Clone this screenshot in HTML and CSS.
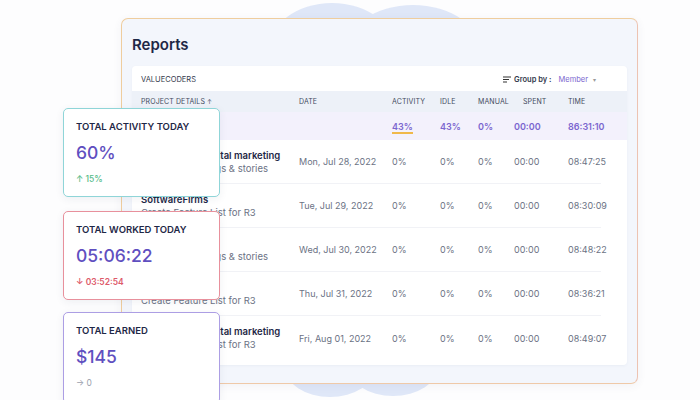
FILE: index.html
```html
<!DOCTYPE html>
<html>
<head>
<meta charset="utf-8">
<link rel="stylesheet" href="styles.css">
</head>
<body>
<div class="stage">
  <div class="blob b1"></div>
  <div class="blob b2"></div>
  <div class="blob b3"></div>
  <div class="blob b4"></div>

  <div class="panel">
    <h1 class="title">Reports</h1>
    <div class="table-card">
      <div class="toolbar">
        <span class="org">VALUECODERS</span>
        <span class="group">
          <svg class="sort-icon" width="8" height="7" viewBox="0 0 8 7"><path d="M0 1h8M0 3.5h6M0 6h4" stroke="#333" stroke-width="1.2"/></svg>
          <b>Group by :</b>
          <span class="member">Member</span>
          <span class="caret">▾</span>
        </span>
      </div>
      <div class="row head">
        <span>PROJECT DETAILS <small>↑</small></span>
        <span>DATE</span>
        <span>ACTIVITY</span>
        <span>IDLE</span>
        <span>MANUAL</span>
        <span class="spent-h">SPENT</span>
        <span>TIME</span>
      </div>
      <div class="row summary">
        <span></span>
        <span></span>
        <span class="act">43%</span>
        <span>43%</span>
        <span>0%</span>
        <span>00:00</span>
        <span>86:31:10</span>
      </div>
      <div class="row data">
        <span class="proj"><b>ValueCoders Digital marketing</b><i>Write weekly blogs &amp; stories</i></span>
        <span>Mon, Jul 28, 2022</span><span>0%</span><span>0%</span><span>0%</span><span>00:00</span><span>08:47:25</span>
      </div>
      <div class="row data">
        <span class="proj"><b>SoftwareFirms</b><i>Create Feature List for R3</i></span>
        <span>Tue, Jul 29, 2022</span><span>0%</span><span>0%</span><span>0%</span><span>00:00</span><span>08:30:09</span>
      </div>
      <div class="row data">
        <span class="proj"><b>SoftwareFirms</b><i>Write weekly blogs &amp; stories</i></span>
        <span>Wed, Jul 30, 2022</span><span>0%</span><span>0%</span><span>0%</span><span>00:00</span><span>08:48:22</span>
      </div>
      <div class="row data">
        <span class="proj"><b>SoftwareFirms</b><i>Create Feature List for R3</i></span>
        <span>Thu, Jul 31, 2022</span><span>0%</span><span>0%</span><span>0%</span><span>00:00</span><span>08:36:21</span>
      </div>
      <div class="row data last">
        <span class="proj"><b>ValueCoders Digital marketing</b><i>Create Feature List for R3</i></span>
        <span>Fri, Aug 01, 2022</span><span>0%</span><span>0%</span><span>0%</span><span>00:00</span><span>08:49:07</span>
      </div>
    </div>
  </div>

  <div class="stat teal">
    <div class="stat-title">TOTAL ACTIVITY TODAY</div>
    <div class="stat-value">60%</div>
    <div class="stat-delta up">↑ 15%</div>
  </div>
  <div class="stat rose">
    <div class="stat-title">TOTAL WORKED TODAY</div>
    <div class="stat-value">05:06:22</div>
    <div class="stat-delta down">↓ 03:52:54</div>
  </div>
  <div class="stat violet">
    <div class="stat-title">TOTAL EARNED</div>
    <div class="stat-value">$145</div>
    <div class="stat-delta flat">→ 0</div>
  </div>
</div>
</body>
</html>
```

FILE: styles.css
```css
* { box-sizing: border-box; }
html, body { margin: 0; padding: 0; }
body {
  width: 700px;
  height: 400px;
  overflow: hidden;
  background: #fdfdfe;
  font-family: Inter, "Liberation Sans", sans-serif;
  color: #1e2746;
}
.stage {
  position: relative;
  width: 700px;
  height: 400px;
  padding: 18px 0 0 121px;
}
.blob {
  position: absolute;
  background: #dfe7f8;
  border-radius: 50%;
}
.b1 { left: 267px; top: 3px; width: 130px; height: 100px; }
.b2 { left: 343px; top: 5px; width: 140px; height: 100px; }
.b3 { left: 285px; top: 337px; width: 90px; height: 60px; }
.b4 { left: 348px; top: 336px; width: 90px; height: 60px; }

.panel {
  position: relative;
  width: 517px;
  height: 366px;
  background: #f3f6fc;
  border: 1.5px solid #efcd9e;
  border-right-color: #edc3b2;
  border-bottom-color: #efc9a8;
  border-radius: 7px;
  padding: 0 10px 0 10px;
  box-shadow: 0 2px 10px rgba(60, 70, 110, 0.06);
}
.title {
  margin: 0;
  height: 47px;
  padding-top: 16px;
  font-size: 15px;
  font-weight: 600;
  color: #1e2746;
}
.table-card {
  background: #fff;
  border-radius: 4px;
  height: 299px;
  box-shadow: 0 1px 3px rgba(60, 70, 110, 0.05);
}
.toolbar {
  height: 25px;
  display: flex;
  align-items: center;
  justify-content: space-between;
  padding: 2px 31px 0 9px;
  font-size: 7.5px;
  color: #333a4d;
}
.group { display: flex; align-items: center; gap: 3px; }
.group b { font-weight: 600; color: #333a4d; margin-right: 4px; }
.member { color: #7b66cf; }
.caret { color: #999; font-size: 6px; margin-left: 2px; }

.row {
  display: grid;
  grid-template-columns: 158px 93px 48px 38px 36px 54px 1fr;
  align-items: center;
  padding-left: 9px;
}
.head {
  height: 21px;
  background: #edf1f8;
  font-size: 7px;
  color: #434b5e;
  letter-spacing: 0.1px;
}
.head small { font-size: 6px; }
.spent-h { padding-left: 9px; }
.summary {
  height: 28px;
  background: #f3f1fc;
  font-size: 9px;
  font-weight: 600;
  color: #7b66cf;
}
.act {
  justify-self: start;
  border-bottom: 2px solid #f0b94a;
  line-height: 11px;
  margin-top: 2px;
}
.data {
  height: 44px;
  font-size: 9px;
  color: #6b7284;
  border-bottom: 1px solid #f1f2f6;
  margin-right: 26px;
}
.data.last { border-bottom: none; }
.proj { display: flex; flex-direction: column; gap: 2px; white-space: nowrap; }
.proj b { font-weight: 600; color: #1e2746; font-size: 9.5px; line-height: 11px; }
.proj i { font-style: normal; color: #6b7284; font-size: 9.5px; line-height: 11px; }

.stat {
  position: absolute;
  left: 63px;
  width: 157px;
  height: 89px;
  background: #fff;
  border: 1.5px solid;
  border-radius: 5px;
  padding: 12px 0 0 12px;
  display: flex;
  flex-direction: column;
  box-shadow: 0 2px 8px rgba(40, 50, 90, 0.07);
}
.teal { top: 108px; border-color: #8fd5d8; }
.rose { top: 211px; border-color: #e8909c; }
.violet { top: 312px; height: 92px; border-color: #ac9ee4; }
.stat-title {
  font-size: 9.5px;
  font-weight: 600;
  color: #1e2746;
  line-height: 12px;
}
.stat-value {
  margin-top: 7.5px;
  font-size: 17.5px;
  font-weight: 500;
  color: #5f4fc0;
  line-height: 24px;
}
.stat-delta {
  margin-top: 8px;
  font-size: 8.5px;
  font-weight: 500;
  line-height: 12px;
}
.up { color: #55bb88; }
.down { color: #dd5a6a; font-weight: 600; }
.flat { color: #9aa0ad; font-weight: 400; }
```
